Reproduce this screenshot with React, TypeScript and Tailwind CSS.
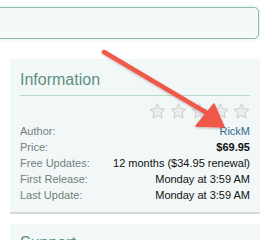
import React from "react";

const Star = () => (
  <svg width="17" height="16" viewBox="0 0 24 23">
    <path
      d="M12 1.2l3.2 6.9 7.5.9-5.5 5.2 1.4 7.4L12 17.9l-6.6 3.7 1.4-7.4L1.3 9l7.5-.9z"
      fill="#ececec"
      stroke="#c9c9c9"
      strokeWidth="1.3"
      strokeLinejoin="round"
    />
  </svg>
);

const rows: { label: string; value: string; cls: string }[] = [
  { label: "Author:", value: "RickM", cls: "text-[#2f6b8c]" },
  { label: "Price:", value: "$69.95", cls: "text-[#111] font-bold" },
  { label: "Free Updates:", value: "12 months ($34.95 renewal)", cls: "text-[#111]" },
  { label: "First Release:", value: "Monday at 3:59 AM", cls: "text-[#111]" },
  { label: "Last Update:", value: "Monday at 3:59 AM", cls: "text-[#111]" },
];

export default function App() {
  return (
    <div className="relative w-[276px] h-[240px] overflow-hidden bg-white font-['Liberation_Sans',Arial,sans-serif]">
      <div className="pt-[7px] pr-[17px] -ml-[8px]">
        <div className="h-[32px] rounded-[5px] border border-[#8fbfa3] bg-[#f5faf9] shadow-[0_0_3px_rgba(120,180,150,0.45)]" />
      </div>

      <div className="mt-[20px] ml-[10px] w-[250px] bg-[#f2f8f7] border-b-2 border-[#d2ddd9] px-[10px] pt-[12px] pb-[9px]">
        <div className="text-[16px] leading-[18px] text-[#5f8f80]">Information</div>
        <div className="mt-[6px] h-px bg-[#b7d9c5]" />
        <div className="mt-[7px] flex justify-end gap-[4px] pr-[0px]">
          <Star />
          <Star />
          <Star />
          <Star />
          <Star />
        </div>
        <div className="mt-[4px] text-[11px] leading-[16px]">
          {rows.map((r) => (
            <div key={r.label} className="flex justify-between">
              <span className="text-[#727f7d]">{r.label}</span>
              <span className={r.cls}>{r.value}</span>
            </div>
          ))}
        </div>
      </div>

      <div className="mt-[10px] ml-[10px] w-[250px] bg-[#f2f8f7] px-[10px] pt-[10px] h-[40px]">
        <div className="text-[16px] leading-[18px] text-[#5f8f80]">Support</div>
      </div>

      <svg className="absolute left-0 top-0" width="276" height="240" viewBox="0 0 276 240">
        <defs>
          <filter id="sh" x="-10%" y="-10%" width="120%" height="120%">
            <feDropShadow dx="0" dy="1" stdDeviation="0.8" floodColor="#000" floodOpacity="0.25" />
          </filter>
        </defs>
        <g filter="url(#sh)">
          <line x1="104" y1="52" x2="207" y2="113" stroke="#f0584a" strokeWidth="4.5" strokeLinecap="round" />
          <polygon points="214,104 196,126 224,127" fill="#f0584a" stroke="#f0584a" strokeWidth="1.5" strokeLinejoin="round" />
        </g>
      </svg>
    </div>
  );
}
